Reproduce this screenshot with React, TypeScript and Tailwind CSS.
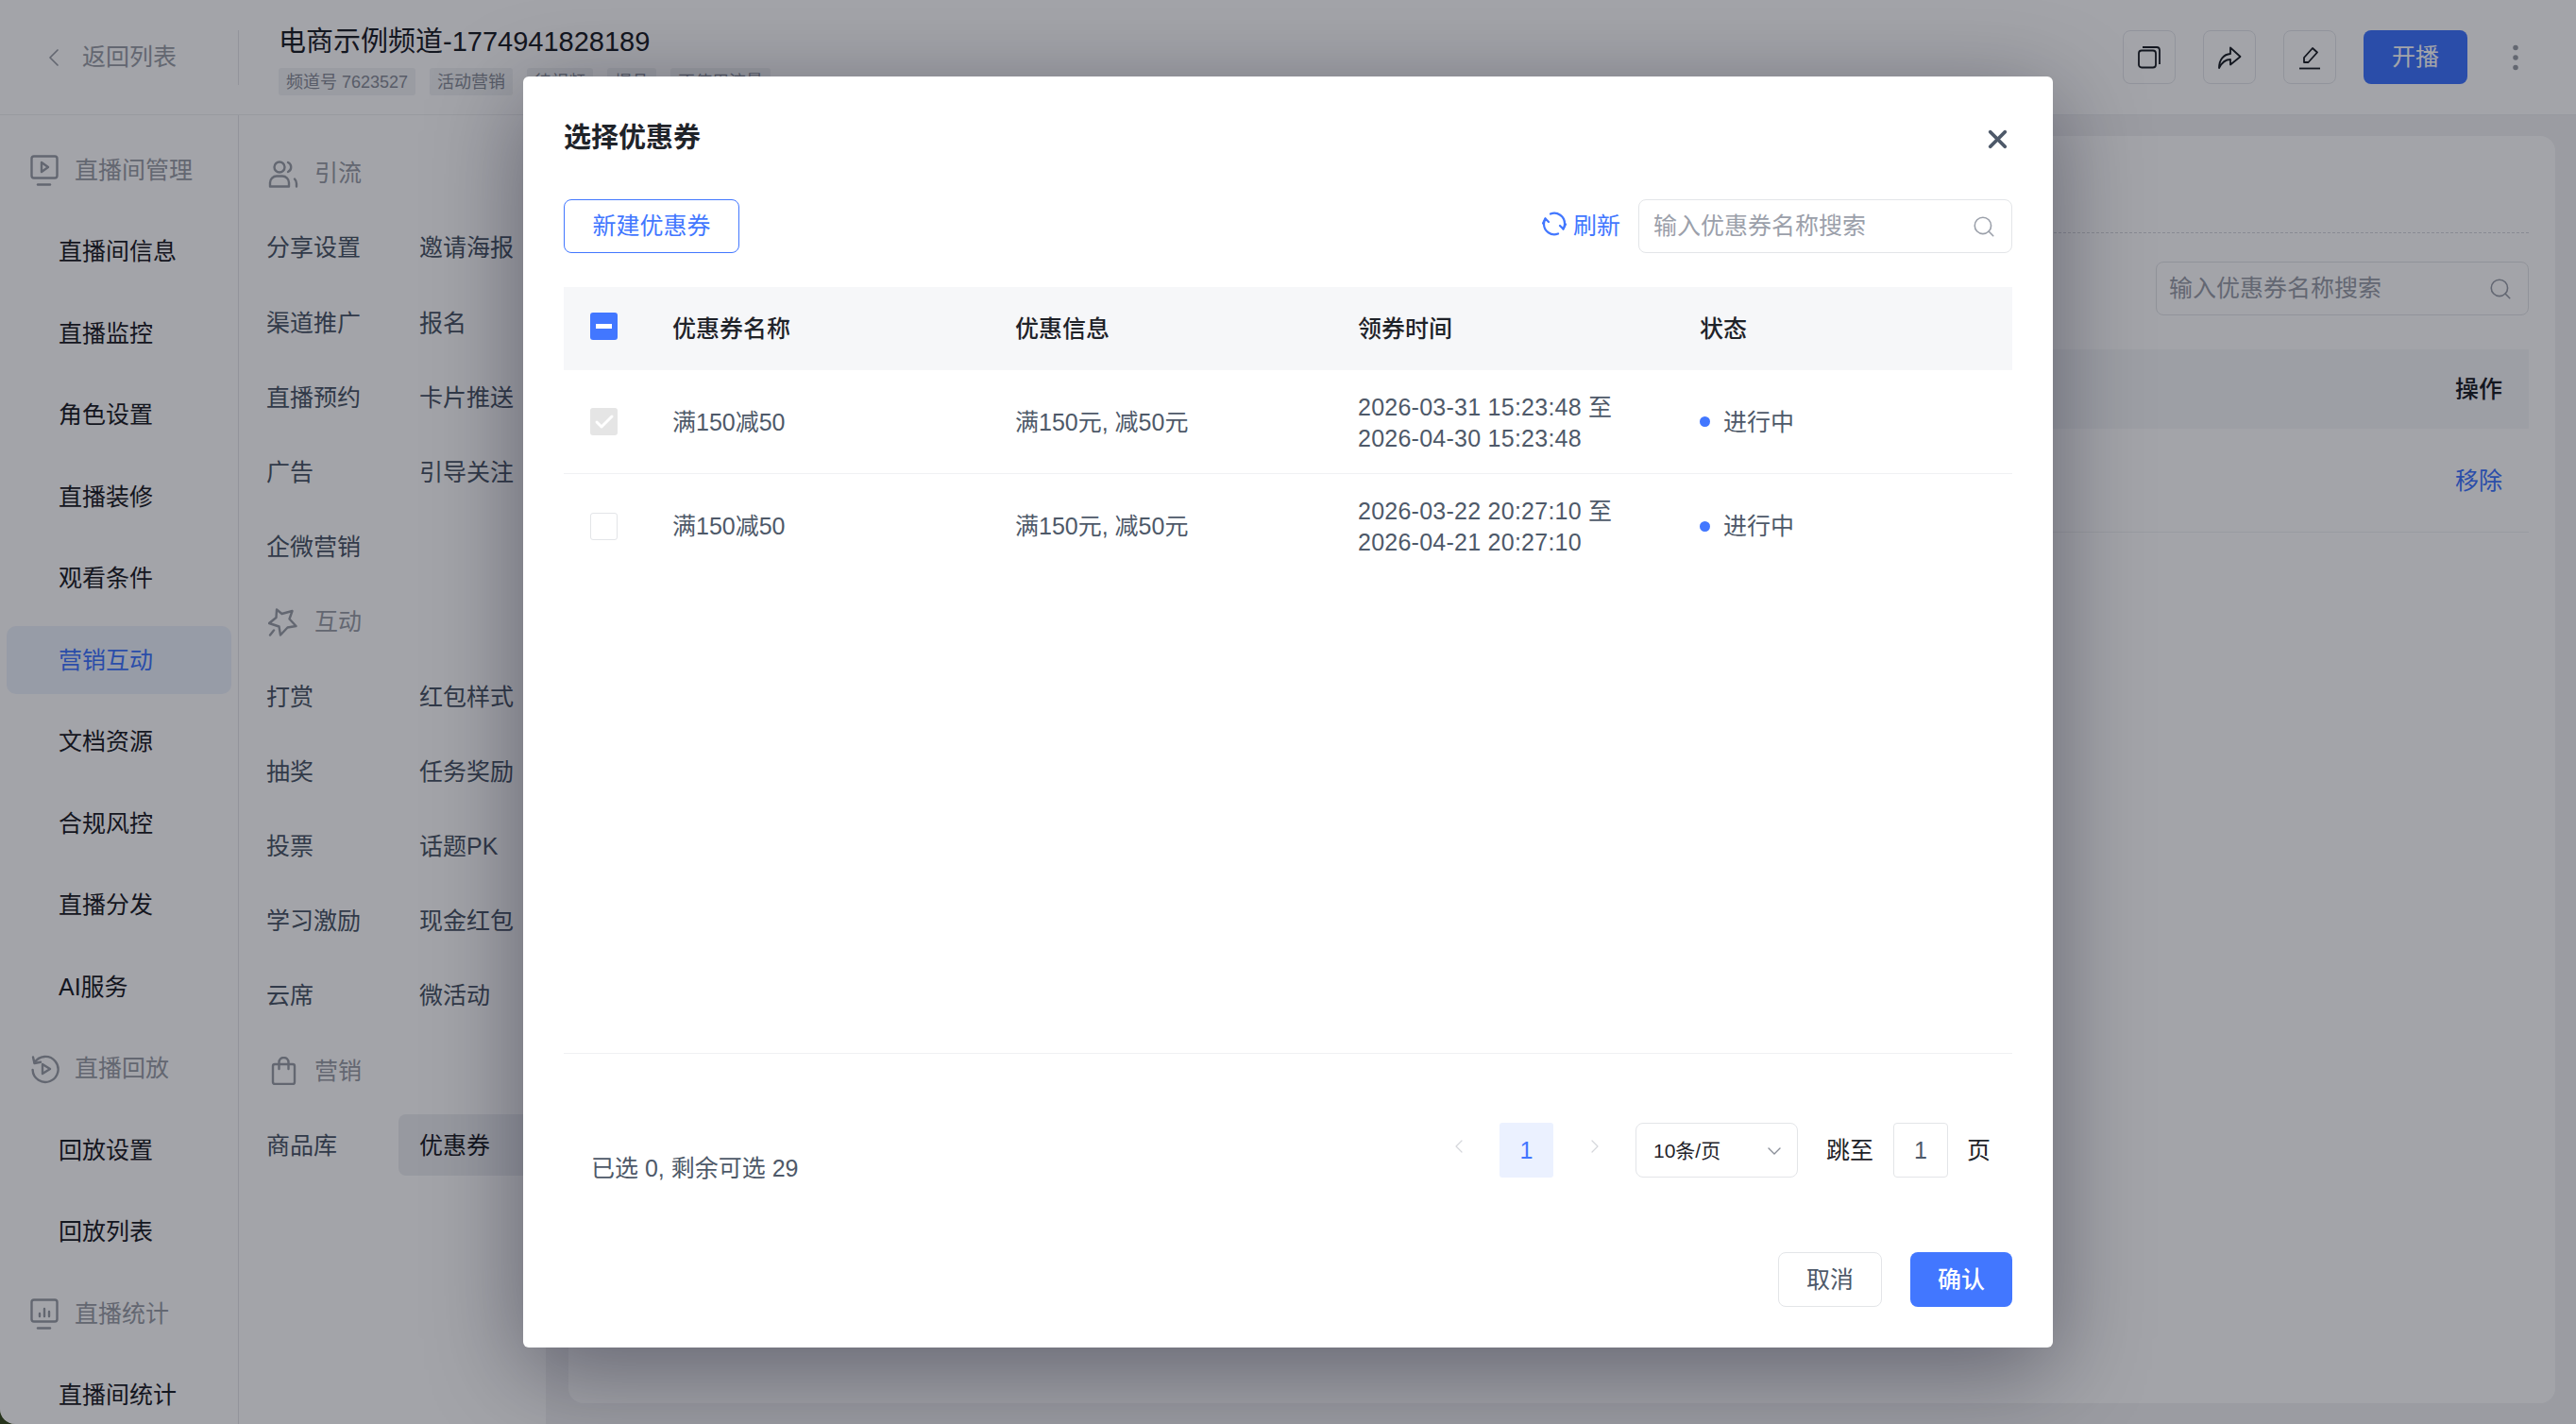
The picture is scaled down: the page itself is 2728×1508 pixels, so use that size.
import React from "react";
import { Check, ChevronDown, ChevronLeft, ChevronRight, Search, X } from "lucide-react";

const FONT = "[font-family:'Liberation_Sans','Noto_Sans_CJK_SC',sans-serif]";

function ScreenIcon({ kind }: { kind: "play" | "chart" }) {
  return (
    <svg width="30" height="34" viewBox="0 0 30 34" fill="none" stroke="#9ca0a8" strokeWidth="2.4">
      <rect x="1.5" y="1.5" width="27" height="23" rx="2.5" />
      <path d="M8 31.5h13" strokeLinecap="round" />
      {kind === "play" ? (
        <path d="M12 8l7 5-7 5z" strokeLinejoin="round" />
      ) : (
        <path d="M10 19v-3M15 19v-8M20 19v-5" strokeLinecap="round" />
      )}
    </svg>
  );
}

function ReplayIcon() {
  return (
    <svg width="32" height="32" viewBox="0 0 32 32" fill="none" stroke="#9ca0a8" strokeWidth="2.4" strokeLinecap="round" strokeLinejoin="round">
      <path d="M4.5 9.5A13.5 13.5 0 1 1 2.6 17" />
      <path d="M3 3.5l1.5 6.5 6.5-1.2" />
      <path d="M13 11l8 5-8 5z" />
    </svg>
  );
}

function GroupIcon({ kind }: { kind: "user" | "star" | "bag" }) {
  return (
    <svg width="32" height="30" viewBox="0 0 32 30" fill="none" stroke="#9ca0a8" strokeWidth="2.4" strokeLinecap="round" strokeLinejoin="round">
      {kind === "user" && (
        <>
          <circle cx="12" cy="8" r="5.500" />
          <path d="M2 28.500v-4a7 7 0 0 1 7-7h6a7 7 0 0 1 7 7v4z" />
          <path d="M21 3a5.500 5.500 0 0 1 0 10M30 28.500v-3a7 7 0 0 0-2-5" />
        </>
      )}
      {kind === "star" && (
        <>
          <path d="M9 1.500l5.500 4.500 11-3-3 8.500 7 7.500-9 1.500-7.500 8-1.500-9-10.500-3.500 7.500-6z" />
          <path d="M2 28.500l4-5" />
        </>
      )}
      {kind === "bag" && (
        <>
          <rect x="5" y="8" width="23" height="21" rx="2" />
          <path d="M11.500 13V6a5 5 0 0 1 10 0v7" />
        </>
      )}
    </svg>
  );
}

function Tag({ children }: { children: React.ReactNode }) {
  return <span className="flex h-[29px] items-center rounded-[3px] bg-[#f1f2f4] px-[8px] text-[18px] leading-none whitespace-nowrap text-[#8a8f99]">{children}</span>;
}

function NavItem({ label, active }: { label: string; active?: boolean }) {
  return (
    <div className={`flex h-[72px] shrink-0 items-center rounded-[10px] pt-[1px] pl-[55px] text-[25px] ${active ? "bg-[#edf2fc] text-[#4277ff]" : "text-[#1f2329]"}`}>{label}</div>
  );
}

function NavGroup({ label, icon }: { label: string; icon: React.ReactNode }) {
  return (
    <div className="flex h-[72px] shrink-0 items-center pt-[1px] pl-[25px] text-[25px] text-[#9ca0a8]">
      <span className="flex w-[47px] items-center">{icon}</span>
      {label}
    </div>
  );
}

function SubGroup({ label, icon }: { label: string; icon: React.ReactNode }) {
  return (
    <div className="col-span-2 flex h-[65px] items-center pt-[1px] pl-[24px] text-[25px] text-[#9ca0a8]">
      <span className="flex w-[49px] items-center">{icon}</span>
      {label}
    </div>
  );
}

function SubItem({ label, active }: { label?: string; active?: boolean }) {
  return (
    <div className={`flex h-[65px] w-[148px] items-center rounded-[8px] pt-[1px] pl-[22px] text-[25px] whitespace-nowrap ${active ? "bg-[#eceef1] text-[#1f2329]" : "text-[#4e5969]"}`}>{label}</div>
  );
}

function HeaderButton({ children }: { children: React.ReactNode }) {
  return <div className="flex h-[57px] w-[56px] items-center justify-center rounded-[8px] border border-[#e5e7eb]">{children}</div>;
}

function CouponRow({ start, end, checked, border }: { start: string; end: string; checked?: boolean; border?: boolean }) {
  return (
    <div className={`flex h-[110px] items-center text-[25px] text-[#4e5969] ${border ? "border-b border-[#f0f1f3]" : ""}`}>
      <div className="flex w-[115px] justify-start pl-[28px]">
        {checked ? (
          <span className="flex h-[29px] w-[29px] items-center justify-center rounded-[3px] bg-[#e5e5e5]">
            <Check size={24} strokeWidth={3} color="#ffffff" />
          </span>
        ) : (
          <span className="h-[29px] w-[29px] rounded-[3px] border border-[#e3e5e8] bg-white" />
        )}
      </div>
      <div className="w-[363px] pt-[2px]">满150减50</div>
      <div className="w-[363px] pt-[2px]">满150元, 减50元</div>
      <div className="w-[362px] pt-[2px] leading-[33px] tracking-[0.25px]">
        <div>{start} 至</div>
        <div>{end}</div>
      </div>
      <div className="flex items-center gap-[14px]">
        <span className="h-[11px] w-[11px] rounded-full bg-[#4277ff]" />
        <span className="pt-[2px]">进行中</span>
      </div>
    </div>
  );
}

export default function App() {
  const nav1: React.ReactNode[] = [
    <NavGroup key="g1" label="直播间管理" icon={<ScreenIcon kind="play" />} />,
    ...["直播间信息", "直播监控", "角色设置", "直播装修", "观看条件"].map((l) => <NavItem key={l} label={l} />),
    <NavItem key="营销互动" label="营销互动" active />,
    ...["文档资源", "合规风控", "直播分发", "AI服务"].map((l) => <NavItem key={l} label={l} />),
    <NavGroup key="g2" label="直播回放" icon={<ReplayIcon />} />,
    ...["回放设置", "回放列表"].map((l) => <NavItem key={l} label={l} />),
    <NavGroup key="g3" label="直播统计" icon={<ScreenIcon kind="chart" />} />,
    <NavItem key="直播间统计" label="直播间统计" />,
  ];

  return (
    <div className={`h-[1508px] w-[2728px] overflow-hidden bg-[#26331c] ${FONT}`}>
      <div className="relative flex h-full w-full flex-col overflow-hidden rounded-bl-[16px] bg-white">
        {/* page header */}
        <header className="flex h-[122px] shrink-0 items-center border-b border-[#eeeff1] pr-[49px]">
          <div className="flex h-[58px] w-[253px] shrink-0 items-center border-r border-[#e6e7ea] pl-[41px] text-[25px] text-[#9ca0a8]">
            <ChevronLeft size={32} strokeWidth={1.3} className="mr-[14px]" />
            返回列表
          </div>
          <div className="mt-[4px] ml-[42px] flex flex-col gap-[8px]">
            <div className="text-[29px] leading-[40px] text-[#1f2329]">电商示例频道-1774941828189</div>
            <div className="flex gap-[15px]">
              <Tag>频道号 7623527</Tag>
              <Tag>活动营销</Tag>
              <Tag>待视频</Tag>
              <Tag>爆品</Tag>
              <Tag>不使用流量</Tag>
            </div>
          </div>
          <div className="ml-auto flex items-center gap-[29px]">
            <HeaderButton>
              <svg width="26" height="26" viewBox="0 0 26 26" fill="none" stroke="#1f2329" strokeWidth="1.8" strokeLinejoin="round">
                <rect x="2" y="5.500" width="18" height="18" rx="3" />
                <path d="M6 2h15a3 3 0 0 1 3 3v15" />
              </svg>
            </HeaderButton>
            <HeaderButton>
              <svg width="26" height="26" viewBox="0 0 26 26" fill="none" stroke="#1f2329" strokeWidth="1.8" strokeLinejoin="round">
                <path d="M2 24c0-9 5-14.500 12-15V2.500L24.500 12 14 20.500V15c-5 0-9 3-12 9z" />
              </svg>
            </HeaderButton>
            <HeaderButton>
              <svg width="26" height="26" viewBox="0 0 26 26" fill="none" stroke="#1f2329" strokeWidth="1.8" strokeLinejoin="round">
                <path d="M7 18v-5L16 3l5 4.500-9.500 10.500z" />
                <path d="M2 24.500h22" />
              </svg>
            </HeaderButton>
            <div className="flex h-[57px] w-[110px] items-center justify-center rounded-[8px] bg-[#4277ff] pt-[1px] text-[25px] text-white">开播</div>
            <svg width="30" height="30" viewBox="0 0 30 30" fill="#9ca0a8" className="ml-[7px]">
              <circle cx="15" cy="4.500" r="2.750" />
              <circle cx="15" cy="15" r="2.750" />
              <circle cx="15" cy="25.500" r="2.750" />
            </svg>
          </div>
        </header>

        <div className="flex min-h-0 flex-1">
          {/* primary nav */}
          <aside className="flex w-[253px] shrink-0 flex-col gap-[14.5px] border-r border-[#e6e7ea] px-[7px] pt-[22px]">{nav1}</aside>

          {/* secondary nav */}
          <aside className="w-[325px] shrink-0 pt-[29px] pl-[7px]">
            <div className="grid grid-cols-[148px_148px] gap-x-[14px] gap-y-[14.2px]">
              <SubGroup label="引流" icon={<GroupIcon kind="user" />} />
              {["分享设置", "邀请海报", "渠道推广", "报名", "直播预约", "卡片推送", "广告", "引导关注", "企微营销", ""].map((l, i) => (
                <SubItem key={i} label={l} />
              ))}
              <SubGroup label="互动" icon={<GroupIcon kind="star" />} />
              {["打赏", "红包样式", "抽奖", "任务奖励", "投票", "话题PK", "学习激励", "现金红包", "云席", "微活动"].map((l) => (
                <SubItem key={l} label={l} />
              ))}
              <SubGroup label="营销" icon={<GroupIcon kind="bag" />} />
              <SubItem label="商品库" />
              <SubItem label="优惠券" active />
            </div>
          </aside>

          {/* main content */}
          <main className="min-w-0 flex-1 bg-[#f2f3f5] pt-[22px] pr-[22px] pb-[22px] pl-[24px]">
            <div className="h-full rounded-[16px] bg-white px-[28px]">
              <div className="h-[103px] border-b border-dashed border-[#d5d7db]" />
              <div className="flex justify-end pt-[30px]">
                <div className="flex h-[57px] w-[395px] items-center justify-between rounded-[8px] border border-[#e3e5e8] pr-[16px] pl-[13px] text-[25px] text-[#9ba0aa]">
                  输入优惠券名称搜索
                  <Search size={26} strokeWidth={1.5} />
                </div>
              </div>
              <div className="mt-[36px] flex h-[84px] items-center justify-end bg-[#f6f7f9] pt-[2px] pr-[28px] text-[25px] font-medium text-[#1f2329]">操作</div>
              <div className="flex h-[110px] items-center justify-end border-b border-[#f0f1f3] pt-[2px] pr-[28px] text-[25px] text-[#4277ff]">移除</div>
            </div>
          </main>
        </div>

        {/* dialog mask */}
        <div className="absolute inset-0 flex items-center justify-center bg-[rgba(0,3,16,0.36)]">
          <div className="flex h-[1346px] w-[1620px] flex-col rounded-[6px] bg-white px-[43px] pb-[44px] shadow-[0_24px_100px_rgba(0,0,24,0.4)]">
            <div className="flex h-[130px] shrink-0 items-center justify-between pt-[2px]">
              <span className="text-[29px] font-semibold text-[#1f2329]">选择优惠券</span>
              <X size={31} strokeWidth={3} color="#4e5969" />
            </div>

            <div className="flex h-[57px] shrink-0 items-center justify-between">
              <div className="flex h-[57px] w-[186px] items-center justify-center rounded-[8px] border border-[#4277ff] text-[25px] text-[#4277ff]">新建优惠券</div>
              <div className="flex items-center">
                <svg width="26" height="26" viewBox="0 0 26 26" fill="none" stroke="#4277ff" strokeWidth="2.2" strokeLinecap="round" strokeLinejoin="round" className="mr-[7px] -mt-[6px]">
                  <path d="M9 2.500A11 11 0 0 1 24 13a11 11 0 0 1-1.500 5.500" />
                  <path d="M17 23.500A11 11 0 0 1 2 13a11 11 0 0 1 1.500-5.500" />
                  <path d="M25 13.500l-2.500 5-3.500-3.500" />
                  <path d="M1 12.500l2.500-5 3.500 3.500" />
                </svg>
                <span className="mr-[19px] text-[25px] text-[#4277ff]">刷新</span>
                <div className="flex h-[57px] w-[396px] items-center justify-between rounded-[8px] border border-[#e3e5e8] pr-[16px] pl-[15px] text-[25px] text-[#9ba0aa]">
                  输入优惠券名称搜索
                  <Search size={26} strokeWidth={1.5} />
                </div>
              </div>
            </div>

            <div className="mt-[36px] flex h-[812px] shrink-0 flex-col border-b border-[#f0f1f3]">
              <div className="flex h-[88px] shrink-0 items-center bg-[#f6f7f9] text-[25px] font-medium text-[#1f2329]">
                <div className="w-[115px] pl-[28px]">
                  <span className="-mt-[5px] flex h-[29px] w-[29px] items-center justify-center rounded-[3px] bg-[#4277ff]">
                    <span className="h-[5px] w-[17px] bg-white" />
                  </span>
                </div>
                <div className="w-[363px] pt-[2px]">优惠券名称</div>
                <div className="w-[363px] pt-[2px]">优惠信息</div>
                <div className="w-[362px] pt-[2px]">领券时间</div>
                <div className="pt-[2px]">状态</div>
              </div>
              <CouponRow start="2026-03-31 15:23:48" end="2026-04-30 15:23:48" checked border />
              <CouponRow start="2026-03-22 20:27:10" end="2026-04-21 20:27:10" />
            </div>

            <div className="flex h-[210px] shrink-0 items-start justify-between pl-[29px]">
              <span className="mt-[103px] text-[25px] leading-[36px] text-[#4e5969]">已选 0, 剩余可选 29</span>
              <div className="mt-[73px] flex items-center">
                <ChevronLeft size={24} strokeWidth={1.2} color="#d5d7db" className="-mt-[8px]" />
                <span className="ml-[31px] flex h-[58px] w-[57px] items-center justify-center rounded-[3px] bg-[#ebf1ff] pt-[2px] text-[25px] text-[#4277ff]">1</span>
                <ChevronRight size={24} strokeWidth={1.2} color="#d5d7db" className="ml-[32px] -mt-[8px]" />
                <div className="ml-[31px] flex h-[58px] w-[172px] items-center justify-between rounded-[8px] border border-[#e3e5e8] pt-[2px] pr-[12px] pl-[18px] text-[21px] text-[#1f2329]">
                  10条/页
                  <ChevronDown size={24} strokeWidth={1.4} color="#8a8f99" />
                </div>
                <span className="ml-[30px] pt-[2px] text-[25px] text-[#1f2329]">跳至</span>
                <span className="ml-[21px] flex h-[58px] w-[58px] items-center justify-center rounded-[4px] border border-[#e3e5e8] pt-[2px] text-[25px] text-[#4e5969]">1</span>
                <span className="mr-[23px] ml-[20px] pt-[2px] text-[25px] text-[#1f2329]">页</span>
              </div>
            </div>

            <div className="flex shrink-0 justify-end gap-[30px]">
              <div className="flex h-[58px] w-[110px] items-center justify-center rounded-[8px] border border-[#e3e5e8] pt-[2px] text-[25px] text-[#4e5969]">取消</div>
              <div className="flex h-[58px] w-[108px] items-center justify-center rounded-[8px] bg-[#4277ff] pt-[2px] text-[25px] font-medium text-white">确认</div>
            </div>
          </div>
        </div>
      </div>
    </div>
  );
}
